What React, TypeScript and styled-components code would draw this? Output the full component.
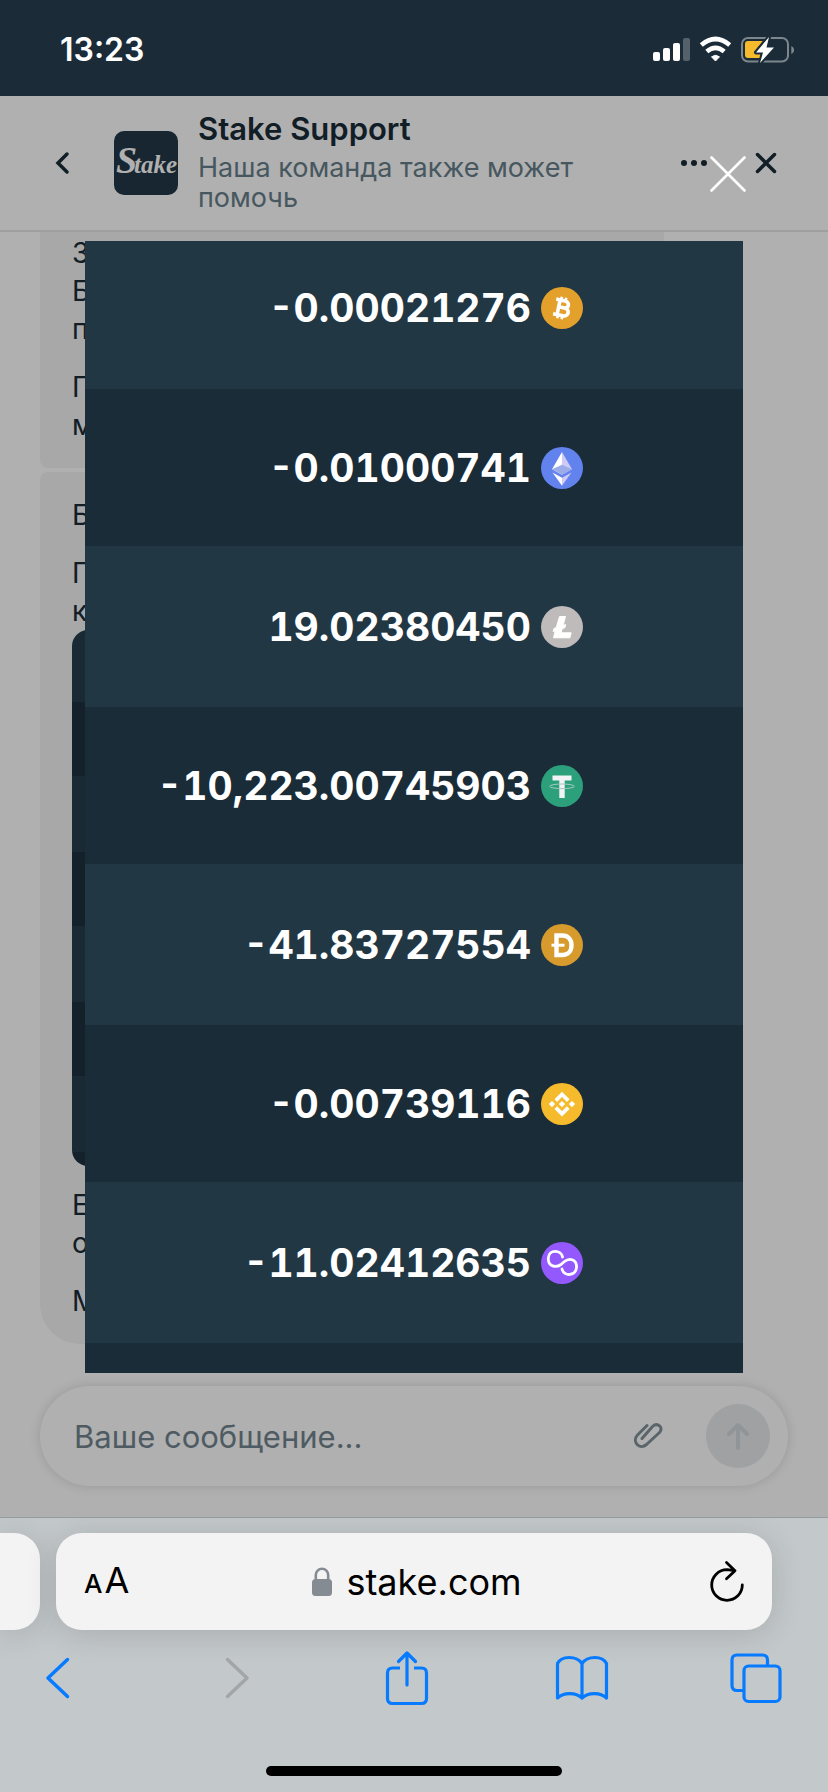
import React from "react";
import styled, { createGlobalStyle } from "styled-components";

const GlobalStyle = createGlobalStyle`
  * { box-sizing: border-box; }
  body { margin: 0; background: #c3c8cb; font-family: Inter, "Liberation Sans", sans-serif; }
  button { border: 0; padding: 0; margin: 0; background: none; font: inherit; color: inherit; cursor: pointer; }
  ul, p { margin: 0; padding: 0; }
  svg { display: block; flex: none; }
`;

const Phone = styled.div`
  min-height: 100vh;
  display: flex;
  flex-direction: column;
`;

const StatusBar = styled.div`
  height: 96px;
  padding: 4px 34px 0 60px;
  display: flex;
  align-items: center;
  justify-content: space-between;
  background: #1b2c38;
  color: #fff;
`;

const Clock = styled.time`
  font-size: 32px;
  line-height: 40px;
  font-weight: 600;
`;

const Messenger = styled.main`
  position: relative;
  flex: 1;
  display: flex;
  flex-direction: column;
  background: #fff;
  color: #1a2c38;
`;

const ChatHeader = styled.header`
  height: 136px;
  padding: 0 48px;
  display: flex;
  align-items: center;
  border-bottom: 2px solid #e6e6e6;
`;

const IconButton = styled.button`
  width: 28px;
  height: 40px;
  display: flex;
  align-items: center;
  justify-content: center;
`;

const Logo = styled.svg`
  margin: 0 20px 0 38px;
`;

const Agent = styled.div`
  flex: 1;
  min-width: 0;
  padding-bottom: 4px;
`;

const AgentName = styled.h1`
  margin: 0 0 4px;
  font-size: 31px;
  line-height: 40px;
  font-weight: 600;
`;

const AgentNote = styled.p`
  max-width: 400px;
  font-size: 27px;
  line-height: 30px;
  color: #687f8b;
`;

const HeaderActions = styled.div`
  display: flex;
  gap: 44px;
`;

const Messages = styled.section`
  padding: 0 40px;
  display: flex;
  flex-direction: column;
  gap: 4px;
`;

const Bubble = styled.article<{ $place: "first" | "last" }>`
  width: 624px;
  max-width: 100%;
  padding: ${(p) => (p.$place === "first" ? "2px 32px 24px" : "24px 32px")};
  display: flex;
  flex-direction: column;
  gap: 20px;
  border-radius: ${(p) => (p.$place === "first" ? "0 0 8px 8px" : "8px 8px 40px 40px")};
  background: #f3f3f3;
  font-size: 28px;
  line-height: 38px;
`;

const BubbleText = styled.p`
  white-space: pre-line;
`;

const BubbleGroup = styled.div`
  display: flex;
  flex-direction: column;
`;

const Thumbnail = styled.div`
  height: 536px;
  border-radius: 16px;
  background: repeating-linear-gradient(#263e4d 0 72px, #1d303d 72px 146px, #263e4d 146px 150px);
`;

const Composer = styled.form`
  height: 100px;
  margin: 42px 40px 31px;
  padding: 0 18px 0 34px;
  display: flex;
  align-items: center;
  border-radius: 50px;
  background: #fff;
  box-shadow: 0 0 10px 2px rgba(0, 0, 0, 0.1);
`;

const MessageInput = styled.input`
  flex: 1;
  min-width: 0;
  height: 60px;
  padding: 0;
  border: 0;
  outline: 0;
  background: none;
  font-family: inherit;
  font-size: 31px;
  color: #1a2c38;
  &::placeholder { color: #73858e; opacity: 1; }
`;

const SendButton = styled.button`
  width: 64px;
  height: 64px;
  margin-left: 44px;
  display: flex;
  align-items: center;
  justify-content: center;
  border-radius: 50%;
  background: #e8eaeb;
`;

const Lightbox = styled.div`
  position: absolute;
  inset: 0;
  padding: 145px 85px 0;
  background: rgba(0, 0, 0, 0.31);
`;

const CloseLightbox = styled.button`
  position: absolute;
  top: 60px;
  right: 82px;
`;

const Balances = styled.ul`
  list-style: none;
  background: #1a2c38;
  padding-bottom: 30px;
`;

const Balance = styled.li<{ $first?: boolean }>`
  height: ${(p) => (p.$first ? 148 : 157)}px;
  padding: 0 160px ${(p) => (p.$first ? 14 : 0)}px 0;
  display: flex;
  align-items: center;
  justify-content: flex-end;
  gap: 10px;
  color: #fff;
  font-size: 39px;
  line-height: 48px;
  font-weight: 700;
  font-variant-numeric: tabular-nums;
  &:nth-child(odd) { background: #223744; }
  &:nth-child(odd):not(:first-child) { height: 161px; }
`;

const Browser = styled.footer`
  height: 275px;
  display: flex;
  flex-direction: column;
  border-top: 1px solid #959c9f;
  background: #c3c8cb;
  overflow: hidden;
`;

const Tabs = styled.div`
  padding: 15px 56px 0 0;
  display: flex;
  gap: 16px;
`;

const NeighbourTab = styled.div`
  width: 40px;
  height: 97px;
  border-radius: 0 26px 26px 0;
  background: #f3f3f3;
  box-shadow: 0 4px 32px rgba(0, 0, 0, 0.14);
`;

const AddressBar = styled.div`
  flex: 1;
  height: 97px;
  padding: 0 28px;
  display: grid;
  grid-template-columns: 66px 1fr 60px;
  align-items: center;
  border-radius: 26px;
  background: #f3f3f3;
  box-shadow: 0 4px 32px rgba(0, 0, 0, 0.14);
  color: #000;
`;

const TextSize = styled.button`
  display: flex;
  align-items: baseline;
  gap: 2px;
  font-size: 36px;
  line-height: 44px;
  small {
    font-size: 26px;
    font-weight: 500;
  }
`;

const Address = styled.button`
  display: flex;
  align-items: center;
  justify-content: center;
  gap: 14px;
  font-size: 36px;
  line-height: 44px;
`;

const Reload = styled.button`
  justify-self: end;
`;

const Toolbar = styled.nav`
  padding: 14px 42px 0 28px;
  display: flex;
  justify-content: space-between;
`;

const ToolButton = styled.button`
  width: 60px;
  height: 68px;
  display: flex;
  align-items: center;
  justify-content: center;
  color: #067bff;
  &:disabled { color: #a3a6a9; }
`;

const HomeIndicator = styled.div`
  width: 296px;
  height: 10px;
  margin: auto auto 16px;
  border-radius: 5px;
  background: #000;
`;

const StatusIcons = () => (
  <svg width="142" height="30" viewBox="652 35 142 30" aria-hidden="true">
    <g fill="#fff">
      <rect x="653" y="52" width="7" height="9" rx="2" />
      <rect x="663" y="48" width="7" height="13" rx="2" />
      <rect x="673" y="43" width="7" height="18" rx="2" />
      <rect x="683" y="38" width="7" height="23" rx="2" opacity="0.25" />
      <path d="M715.500 61l-4-4.200q4-3 8 0z" stroke="#fff" strokeWidth="1" strokeLinejoin="round" />
    </g>
    <path d="M701.300 45q14.200-12 28.400 0M706.800 51.500q8.700-7.400 17.400 0" fill="none" stroke="#fff" strokeWidth="4.600" />
    <rect x="742" y="38" width="46" height="23.500" rx="6" fill="none" stroke="#7c868c" strokeWidth="2" />
    <path d="M791.300 46v8q2.800-1.200 2.800-4t-2.800-4z" fill="#7c868c" />
    <path d="M748 41h15l-9 11h7l-1 6h-12q-3 0-3-3V44q0-3 3-3z" fill="#f6bb2c" />
    <path
      d="M769 37l-13 15.500h7l-3 10.500 14-15.500h-7.500z"
      fill="#fff"
      stroke="#1b2c38"
      strokeWidth="4"
      paintOrder="stroke"
      strokeLinejoin="round"
    />
  </svg>
);

const StakeLogo = () => (
  <Logo width="64" height="64" viewBox="0 0 64 64" role="img" aria-label="Stake">
    <rect width="64" height="64" rx="10" fill="#223846" />
    <text x="2" y="42" fill="#fff" fontFamily="'Liberation Serif', serif" fontWeight="700" fontStyle="italic" fontSize="25">
      <tspan fontSize="38">S</tspan>
      <tspan x="20">take</tspan>
    </text>
  </Logo>
);

type CoinName = "btc" | "eth" | "ltc" | "usdt" | "doge" | "bnb" | "matic";

const coinColors: Record<CoinName, string> = {
  btc: "#e3a12c",
  eth: "#6283ee",
  ltc: "#bfbbbb",
  usdt: "#2ca07b",
  doge: "#d69a2d",
  bnb: "#f6bb2c",
  matic: "#9458ff",
};

const coinMarks: Record<CoinName, React.ReactNode> = {
  btc: (
    <g transform="rotate(12 21 21)" fill="none" stroke="#fff" strokeWidth="3.600">
      <path d="M13.500 13.500h9c5.500 0 5.500 7 0 7H17.500h6c6 0 6 8 0 8h-10M17.500 13.500v15" />
      <path d="M18.500 14v-4M23 14v-4M18.500 28v4M23 28v4" strokeWidth="2.600" />
    </g>
  ),
  eth: (
    <>
      <path d="M21 5l-10 17.200 10 5.500z" fill="#fff" />
      <path d="M21 5l10 17.200-10 5.500z" fill="#cfc9f7" />
      <path d="M11 22.200l10-4.500 10 4.500-10 5.500z" fill="#9cabea" />
      <path d="M11.500 25.500l9.500 5.300v8z" fill="#fff" />
      <path d="M30.500 25.500l-9.500 5.300v8z" fill="#cfc9f7" />
    </>
  ),
  ltc: (
    <path
      d="M18.500 10.500h6l-2.400 9 2.600-1-.9 3.300-2.600 1-1 4h10l-1.300 5H12.500l1.800-7-2.100.8.900-3.200 2.200-.9z"
      fill="#fff"
      stroke="#fff"
      strokeWidth="1"
      strokeLinejoin="round"
    />
  ),
  usdt: (
    <>
      <path d="M11.500 10.500h19v5h-6.800V33h-5.400V15.500h-6.800z" fill="#f2f4f4" />
      <ellipse cx="21" cy="21.300" rx="12.300" ry="2.300" fill="none" stroke="#a9c8bd" strokeWidth="1" />
    </>
  ),
  doge: (
    <>
      <path d="M15.500 11.500h6c5.500 0 9 4 9 9.700s-3.500 9.800-9 9.800h-6z" fill="none" stroke="#fff" strokeWidth="4.400" />
      <path d="M10.500 21.200h13" stroke="#fff" strokeWidth="3" />
    </>
  ),
  bnb: (
    <>
      <path d="M14.800 17.600L21 11.300l6.200 6.300M14.800 24.600L21 30.900l6.200-6.300" fill="none" stroke="#fff" strokeWidth="3.700" />
      <path
        d="M21 17.900l3.200 3.200-3.200 3.200-3.200-3.200zM11 17.900l3.200 3.200-3.200 3.200-3.200-3.200zM31 17.900l3.200 3.200-3.200 3.200-3.200-3.200z"
        fill="#fff"
      />
    </>
  ),
  matic: (
    <path
      d="M21.500 15C20.500 8 8 6.500 7.300 16C7 25 15 26 20 22.500L23.500 19.500C29 15 36 18 35.500 25.500C35 34 23 35 21 27"
      fill="none"
      stroke="#fff"
      strokeWidth="2.800"
      strokeLinecap="round"
    />
  ),
};

const Coin = ({ name }: { name: CoinName }) => (
  <svg width="42" height="42" viewBox="0 0 42 42" role="img" aria-label={name}>
    <circle cx="21" cy="21" r="21" fill={coinColors[name]} />
    {coinMarks[name]}
  </svg>
);

const balances: { amount: string; coin: CoinName }[] = [
  { amount: "-0.00021276", coin: "btc" },
  { amount: "-0.01000741", coin: "eth" },
  { amount: "19.02380450", coin: "ltc" },
  { amount: "-10,223.00745903", coin: "usdt" },
  { amount: "-41.83727554", coin: "doge" },
  { amount: "-0.00739116", coin: "bnb" },
  { amount: "-11.02412635", coin: "matic" },
];

export default function App() {
  return (
    <Phone>
      <GlobalStyle />
      <StatusBar>
        <Clock>13:23</Clock>
        <StatusIcons />
      </StatusBar>

      <Messenger>
        <ChatHeader>
          <IconButton aria-label="Back">
            <svg width="28" height="24" viewBox="0 0 28 24" fill="none" stroke="#1a2c38" strokeWidth="3.500">
              <path d="M19 3l-9 9 9 9" strokeLinecap="round" />
            </svg>
          </IconButton>
          <StakeLogo />
          <Agent>
            <AgentName>Stake Support</AgentName>
            <AgentNote>Наша команда также может помочь</AgentNote>
          </Agent>
          <HeaderActions>
            <IconButton aria-label="More">
              <svg width="28" height="8" viewBox="0 0 28 8" fill="#1a2c38">
                <circle cx="4" cy="4" r="3" />
                <circle cx="14" cy="4" r="3" />
                <circle cx="24" cy="4" r="3" />
              </svg>
            </IconButton>
            <IconButton aria-label="Close chat">
              <svg width="24" height="24" viewBox="0 0 24 24" fill="none" stroke="#1a2c38" strokeWidth="3.500" strokeLinecap="round">
                <path d="M3.500 3.500l17 17M20.500 3.500l-17 17" />
              </svg>
            </IconButton>
          </HeaderActions>
        </ChatHeader>

        <Messages>
          <Bubble $place="first">
            <BubbleText>{"З\nБ\nп"}</BubbleText>
            <BubbleText>{"П\nм"}</BubbleText>
          </Bubble>
          <Bubble $place="last">
            <BubbleText>Б</BubbleText>
            <BubbleGroup>
              <BubbleText>{"П\nк"}</BubbleText>
              <Thumbnail />
            </BubbleGroup>
            <BubbleText>{"Е\nо"}</BubbleText>
            <BubbleText>М</BubbleText>
          </Bubble>
        </Messages>

        <Composer onSubmit={(e) => e.preventDefault()}>
          <MessageInput type="text" aria-label="Ваше сообщение" placeholder="Ваше сообщение..." />
          <IconButton type="button" aria-label="Attach">
            <svg width="30" height="26" viewBox="0 0 30 26" fill="none" stroke="#83939b" strokeWidth="3" strokeLinecap="round" strokeLinejoin="round">
              <path d="M14 2.500L4.500 12C-1.500 18.500 6.500 27.500 13.500 21.500L26.500 9.500C31 4.500 24.500-1 19.500 3.500L9 15.500" />
            </svg>
          </IconButton>
          <SendButton type="submit" aria-label="Send">
            <svg width="24" height="28" viewBox="0 0 24 28" fill="none" stroke="#d0d8dc" strokeWidth="4" strokeLinecap="round" strokeLinejoin="round">
              <path d="M12 26V3.500M3 12l9-9 9 9" />
            </svg>
          </SendButton>
        </Composer>

        <Lightbox role="dialog" aria-label="Attachment">
          <CloseLightbox aria-label="Close">
            <svg width="36" height="36" viewBox="0 0 36 36" fill="none" stroke="#fff" strokeWidth="2.600" strokeLinecap="round">
              <path d="M1.500 1.500l33 33M34.500 1.500l-33 33" />
            </svg>
          </CloseLightbox>
          <Balances>
            {balances.map((b, i) => (
              <Balance key={b.coin} $first={i === 0}>
                <span>{b.amount}</span>
                <Coin name={b.coin} />
              </Balance>
            ))}
          </Balances>
        </Lightbox>
      </Messenger>

      <Browser>
        <Tabs>
          <NeighbourTab />
          <AddressBar>
            <TextSize aria-label="Text size">
              <small>A</small>
              <span>A</span>
            </TextSize>
            <Address>
              <svg width="20" height="30" viewBox="0 0 20 30" aria-hidden="true">
                <rect y="12" width="20" height="17" rx="3.500" fill="#858b92" />
                <path d="M3.800 13V8a6.200 6.200 0 0 1 12.400 0v5" fill="none" stroke="#858b92" strokeWidth="2.600" />
              </svg>
              stake.com
            </Address>
            <Reload aria-label="Reload">
              <svg width="34" height="46" viewBox="0 0 34 46" fill="none" stroke="#000" strokeWidth="2.800" strokeLinecap="round" strokeLinejoin="round">
                <path d="M32.300 26A15.300 15.300 0 1 1 17 10.700l8 1M16.500 3.500l8.500 8.200-8.500 8" />
              </svg>
            </Reload>
          </AddressBar>
        </Tabs>
        <Toolbar>
          <ToolButton aria-label="Previous page">
            <svg width="60" height="44" viewBox="0 0 60 44" fill="none" stroke="currentColor" strokeWidth="3.500" strokeLinecap="round" strokeLinejoin="round">
              <path d="M39.500 3.500L20 22l19.500 18.500" />
            </svg>
          </ToolButton>
          <ToolButton aria-label="Next page" disabled>
            <svg width="60" height="44" viewBox="0 0 60 44" fill="none" stroke="currentColor" strokeWidth="3.500" strokeLinecap="round" strokeLinejoin="round">
              <path d="M24.500 3.500L44 22 24.500 40.500" />
            </svg>
          </ToolButton>
          <ToolButton aria-label="Share">
            <svg width="44" height="56" viewBox="0 0 44 56" fill="none" stroke="currentColor" strokeWidth="3.200" strokeLinecap="round" strokeLinejoin="round">
              <path d="M15 18H7.500Q2.500 18 2.500 23v25.500q0 5 5 5h29q5 0 5-5V23q0-5-5-5H29" strokeLinecap="butt" />
              <path d="M22 35V3M13.500 11.500L22 3l8.500 8.500" />
            </svg>
          </ToolButton>
          <ToolButton aria-label="Bookmarks">
            <svg width="54" height="46" viewBox="0 0 54 46" fill="none" stroke="currentColor" strokeWidth="3.200" strokeLinejoin="round">
              <path d="M27 8.500C21.500.5 6.500.5 2.500 8.500V43c6-5.500 18-6 24.500 0 6.500-6 18.500-5.500 24.500 0V8.500c-4-8-19-8-24.500 0zV43" />
            </svg>
          </ToolButton>
          <ToolButton aria-label="Tabs">
            <svg width="52" height="52" viewBox="0 0 52 52" fill="none" stroke="currentColor" strokeWidth="3.200" strokeLinejoin="round">
              <rect x="14" y="14" width="36" height="35.500" rx="4.500" />
              <path d="M14 38.500H7q-5 0-5-5V8q0-5 5-5h25.500q5 0 5 5v6" />
            </svg>
          </ToolButton>
        </Toolbar>
        <HomeIndicator />
      </Browser>
    </Phone>
  );
}
